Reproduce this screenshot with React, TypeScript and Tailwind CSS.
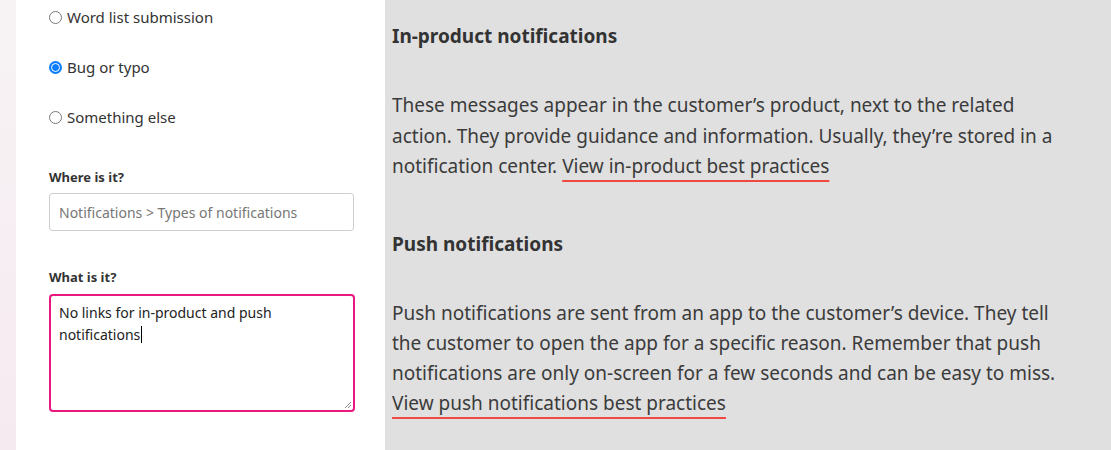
import { FC } from 'react';

const radioOptions = [
    { label: 'Word list submission', checked: false },
    { label: 'Bug or typo', checked: true },
    { label: 'Something else', checked: false },
];

const Radio: FC<{ checked: boolean }> = ({ checked }) =>
    checked ? (
        <span className="flex size-[13px] items-center justify-center rounded-full bg-[#0a7cff]">
            <span className="size-[9px] rounded-full border-[1.5px] border-white bg-[#0a7cff]" />
        </span>
    ) : (
        <span className="size-[13px] rounded-full border border-[#7a7a7a] bg-white" />
    );

const ReportForm: FC = () => (
    <div className="flex w-[369px] shrink-0 flex-col bg-white pl-[33px] pt-[7px] text-[#333]">
        <div className="flex flex-col gap-[30px]">
            {radioOptions.map((option) => (
                <label
                    key={option.label}
                    className="flex h-5 items-center gap-[5px] text-[15px]">
                    <Radio checked={option.checked} />
                    <span>{option.label}</span>
                </label>
            ))}
        </div>

        <div className="mt-[42px] text-[13px] font-bold leading-4">
            Where is it?
        </div>
        <div className="mt-2 flex h-[38px] w-[305px] items-center rounded-[3px] border border-[#cfcfcf] px-[9px] text-[14px] text-[#777]">
            Notifications &gt; Types of notifications
        </div>

        <div className="mt-[38px] text-[13px] font-bold leading-4">
            What is it?
        </div>
        <div className="relative mt-[9px] h-[118px] w-[306px] rounded-[4px] border-2 border-[#e8187f] px-2 pt-[6px] text-[14px] leading-[21px] text-[#222]">
            No links for in-product and push notifications
            <span className="ml-px inline-block h-[17px] w-px translate-y-[3px] bg-black" />
            <svg
                className="absolute bottom-[1px] right-[1px]"
                width="9"
                height="9"
                viewBox="0 0 9 9">
                <path
                    d="M8 2 L2 8 M8 5 L5 8"
                    stroke="#888"
                    strokeWidth="1"
                />
            </svg>
        </div>
    </div>
);

const DocLink: FC<{ children: string }> = ({ children }) => (
    <a
        href="#"
        className="underline decoration-[#f04a40] decoration-[1.5px] underline-offset-[7px]">
        {children}
    </a>
);

export default function App() {
    return (
        <div
            className="flex h-[450px] w-[1111px] overflow-hidden"
            style={{ fontFamily: '"Noto Sans", Lato, sans-serif' }}>
            <div className="w-4 shrink-0 bg-gradient-to-b from-[#f7f3f4] to-[#f6eaf1]" />
            <ReportForm />
            <div className="flex-1 bg-[#e0e0e0] pl-[7px] pt-[24px] text-[#3b3b3b]">
                <div className="max-w-[685px]">
                    <h2 className="text-[19px] font-bold leading-6 text-[#333]">
                        In-product notifications
                    </h2>
                    <p className="mt-[42px] text-[19px] leading-[30.5px]">
                        These messages appear in the customer’s product, next
                        to the related action. They provide guidance and
                        information. Usually, they’re stored in a notification
                        center.{' '}
                        <DocLink>View in-product best practices</DocLink>
                    </p>
                    <h2 className="mt-[50px] text-[19px] font-bold leading-6 text-[#333]">
                        Push notifications
                    </h2>
                    <p className="mt-[42px] text-[19px] leading-[30px]">
                        Push notifications are sent from an app to the
                        customer’s device. They tell the customer to open the
                        app for a specific reason. Remember that push
                        notifications are only on-screen for a few seconds and
                        can be easy to miss.{' '}
                        <DocLink>View push notifications best practices</DocLink>
                    </p>
                </div>
            </div>
        </div>
    );
}
